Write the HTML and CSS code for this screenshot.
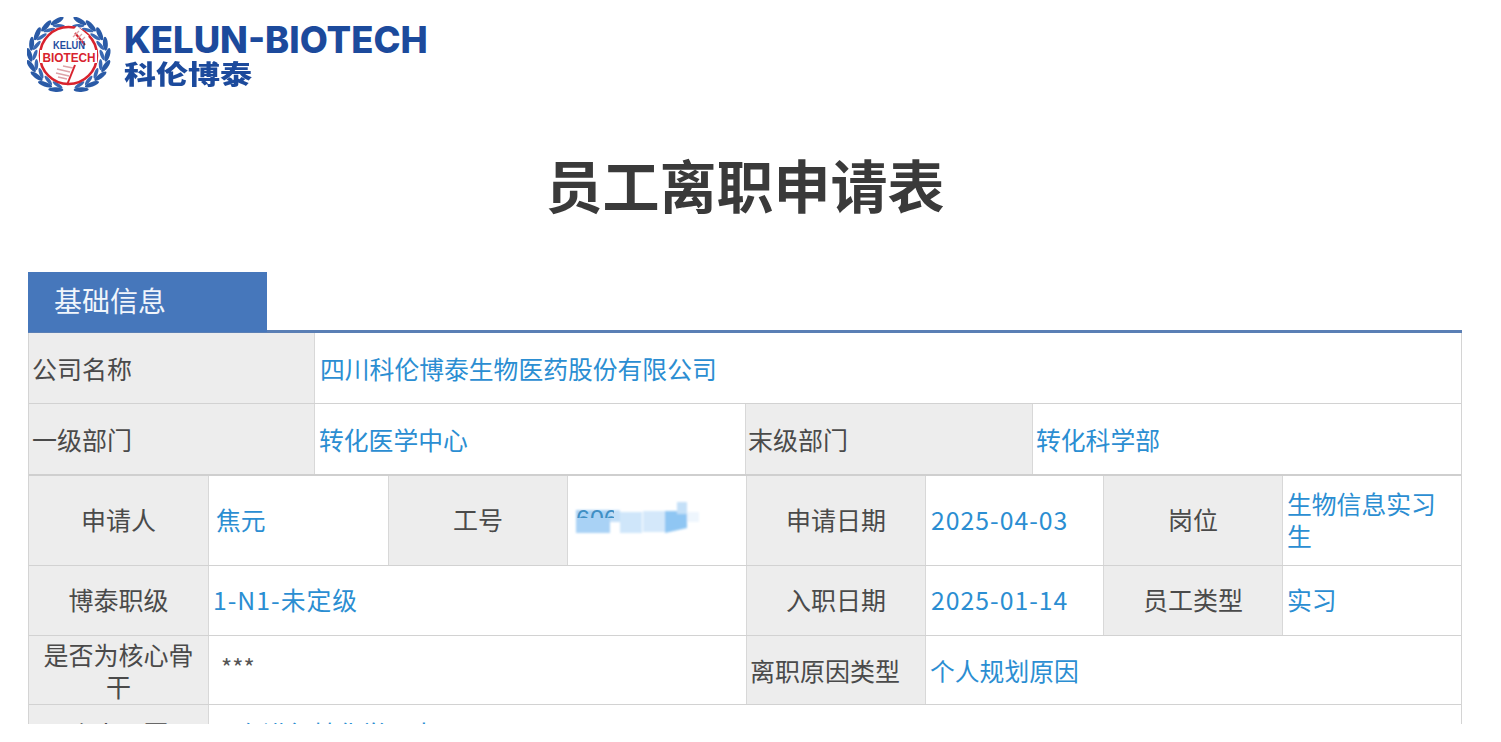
FILE: index.html
```html
<!DOCTYPE html>
<html lang="zh-CN">
<head>
<meta charset="utf-8">
<title>员工离职申请表</title>
<link rel="stylesheet" href="styles.css">
</head>
<body>
<div class="page">
  <header class="logo">
    <svg class="emblem" width="86" height="78" viewBox="0 0 86 78" aria-hidden="true">
      <defs>
        <g id="leaf">
          <ellipse cx="41.5" cy="2.4" rx="7" ry="2.3" transform="rotate(-16 41.5 2.4)" fill="#2a5aa6"/>
          <ellipse cx="41.5" cy="7.4" rx="5.6" ry="1.7" transform="rotate(18 41.5 7.4)" fill="#3a69b3"/>
        </g>
        <g id="branch" transform="translate(-3.3 0) scale(1.08 1)">
          <use href="#leaf" transform="rotate(-17 41.5 38.5)"/>
          <use href="#leaf" transform="rotate(-35 41.5 38.5)"/>
          <use href="#leaf" transform="rotate(-53 41.5 38.5)"/>
          <use href="#leaf" transform="rotate(-71 41.5 38.5)"/>
          <use href="#leaf" transform="rotate(-89 41.5 38.5)"/>
          <use href="#leaf" transform="rotate(-107 41.5 38.5)"/>
          <use href="#leaf" transform="rotate(-125 41.5 38.5)"/>
          <use href="#leaf" transform="rotate(-143 41.5 38.5)"/>
          <use href="#leaf" transform="rotate(-161 41.5 38.5)"/>
        </g>
      </defs>
      <use href="#branch"/>
      <use href="#branch" transform="translate(83 0) scale(-1 1)"/>
      <circle cx="41.5" cy="38.5" r="28.5" fill="#fff" stroke="#d8232e" stroke-width="2.6"/>
      <path d="M44 15 L50 9 L62 19 L52 26 Z" fill="#fff"/>
      <path d="M48 16 L58 28" stroke="#d8232e" stroke-width="2" fill="none"/>
      <path d="M46 20 l6 -6 M49 23 l6 -6 M52 26 l6 -6" stroke="#dda2a8" stroke-width="1.3" fill="none"/>
      <rect x="13" y="33" width="57" height="13" fill="#fff"/>
      <text x="42" y="32" class="emblem-small" textLength="32" lengthAdjust="spacingAndGlyphs">KELUN</text>
      <text x="42" y="45" class="emblem-big" textLength="53" lengthAdjust="spacingAndGlyphs">BIOTECH</text>
      <path d="M48 48 L40 68" stroke="#d8232e" stroke-width="2" fill="none"/>
      <path d="M30 52 l13 3 M29 56 l13 3 M31 60 l9 2 M36 49 l10 2" stroke="#dda2a8" stroke-width="1.5" fill="none"/>
    </svg>
    <div class="brand">
      <div class="brand-en">KELUN-BIOTECH</div>
      <div class="brand-cn">科伦博泰</div>
    </div>
  </header>

  <h1 class="title">员工离职申请表</h1>

  <div class="tabbar"><div class="tab">基础信息</div></div>

  <section class="form">
    <div class="row row-a">
      <div class="cell label left">公司名称</div>
      <div class="cell value">四川科伦博泰生物医药股份有限公司</div>
    </div>
    <div class="row row-b">
      <div class="cell label left">一级部门</div>
      <div class="cell value">转化医学中心</div>
      <div class="cell label left">末级部门</div>
      <div class="cell value">转化科学部</div>
    </div>
    <div class="row row-c">
      <div class="cell label">申请人</div>
      <div class="cell value pad">焦元</div>
      <div class="cell label">工号</div>
      <div class="cell value masked">
        <svg width="150" height="50" viewBox="0 0 150 50" aria-hidden="true">
          <defs>
            <filter id="soft"><feGaussianBlur stdDeviation="1.2"/></filter>
            <clipPath id="digits-clip"><rect x="0" y="0" width="46" height="24"/></clipPath>
          </defs>
          <g filter="url(#soft)">
            <rect x="8" y="16" width="34" height="23" fill="#a9d2f5"/>
            <rect x="42" y="16" width="10" height="12" fill="#c4e0f8"/>
            <rect x="52" y="18" width="22" height="21" fill="#cfe6fa"/>
            <rect x="75" y="17" width="22" height="21" fill="#d4e8fa"/>
            <path d="M97 17 H119 V34 L97 39 Z" fill="#8fc6f3"/>
            <rect x="109" y="8" width="10" height="12" fill="#c4e0f8"/>
            <rect x="119" y="18" width="12" height="10" fill="#eef6fd"/>
          </g>
          <text x="8" y="34" class="mask-digits" clip-path="url(#digits-clip)">606</text>
        </svg>
      </div>
      <div class="cell label">申请日期</div>
      <div class="cell value num">2025-04-03</div>
      <div class="cell label">岗位</div>
      <div class="cell value wrap">生物信息实习生</div>
    </div>
    <div class="row row-d">
      <div class="cell label">博泰职级</div>
      <div class="cell value span3 grade">1-N1-未定级</div>
      <div class="cell label">入职日期</div>
      <div class="cell value num">2025-01-14</div>
      <div class="cell label">员工类型</div>
      <div class="cell value last-value">实习</div>
    </div>
    <div class="row row-e">
      <div class="cell label tight">是否为核心骨干</div>
      <div class="cell plain span3">***</div>
      <div class="cell label left">离职原因类型</div>
      <div class="cell value span3">个人规划原因</div>
    </div>
    <div class="row row-f">
      <div class="cell label">个人原因</div>
      <div class="cell value span7">正在进行转化学习中</div>
    </div>
  </section>
</div>
</body>
</html>
```
FILE: styles.css
```css
* { box-sizing: border-box; }
html, body { margin: 0; background: #fff; }
body { font-family: "Noto Sans CJK SC", "Liberation Sans", sans-serif; overflow: hidden; }
.page { height: 724px; overflow: hidden; padding: 16px 39px 0 28px; background: #fff; }

.logo { display: flex; align-items: center; gap: 11px; height: 80px; margin-left: -1px; }
.emblem { flex: none; }
.emblem-small, .emblem-big { font-family: "Liberation Sans", sans-serif; font-weight: 700; text-anchor: middle; }
.emblem-small { font-size: 10.5px; fill: #1f4d9e; }
.emblem-big { font-size: 13px; fill: #d8232e; }
.brand { color: #1c4a9c; line-height: 1; }
.brand-en { font-family: Inter, "Liberation Sans", sans-serif; font-weight: 800; font-size: 36.4px; height: 38px; line-height: 38px; }
.brand-cn { font-weight: 900; font-size: 32px; height: 32px; line-height: 32px; transform: scaleY(.82); transform-origin: left top; }

.title { margin: 0; height: 176px; padding-top: 48px; text-align: center; font-size: 57px; line-height: 78px; font-weight: 700; color: #3a3a3a; }

.tabbar { height: 61px; border-bottom: 3px solid #5a7fb5; }
.tab { width: 239px; height: 60px; padding-left: 26px; background: #4677bb; color: #f0f5fb; font-size: 28px; line-height: 56px; }

.form { border-left: 1px solid #d4d4d4; border-right: 1px solid #d4d4d4; font-size: 25px; color: #444; }
.row { display: grid; border-bottom: 1px solid #d2d2d2; }
.row-a { grid-template-columns: 286px 1fr; height: 71px; }
.row-b { grid-template-columns: 286px 431px 287px 1fr; border-bottom: 2px solid #cfcfcf; height: 72px; }
.row-c, .row-d, .row-e, .row-f { grid-template-columns: 180px 180px 179px 179px 179px 178px 179px 1fr; }
.row-c { height: 90px; }
.row-d { height: 70px; }
.row-e { height: 69px; }
.row-f { height: 70px; }

.cell { display: flex; align-items: center; min-width: 0; line-height: 32px; border-right: 1px solid #d8d8d8; }
.cell:last-child { border-right: 0; }
.row-c .cell, .row-d .cell { padding-bottom: 4px; }
.label { background: #ededed; justify-content: center; text-align: center; color: #4a4a4a; }
.label.left { justify-content: flex-start; padding-left: 3px; }
.row-b .label.left:nth-child(3) { padding-left: 2px; }
.label.tight { padding: 0 10px; }
.value { color: #2b8ed2; padding-left: 5px; background: #fff; font-size: 24.8px; }
.row-b .value { padding-left: 4px; }
.row-b .value:last-child { padding-left: 3px; }
.row-c .pad { padding-left: 7px; }
.num { letter-spacing: 1px; }
.grade { letter-spacing: 1px; padding-left: 4px; }
.last-value { padding-left: 4px; }
.plain { padding: 0 0 6px 12px; background: #fff; color: #555; font-size: 24px; }
.row-e .value { padding-left: 4px; }
.wrap { padding: 0 20px 4px 4px; }
.span3 { grid-column: span 3; }
.row-f .span7 { grid-column: span 7; align-items: flex-start; padding: 12px 0 0 4px; }
.row-f .label { align-items: flex-start; padding-top: 12px; }
.masked { padding: 0 0 4px 0; }
.mask-digits { font-size: 25px; fill: #3f8fc4; font-family: "Liberation Sans", sans-serif; }
```
